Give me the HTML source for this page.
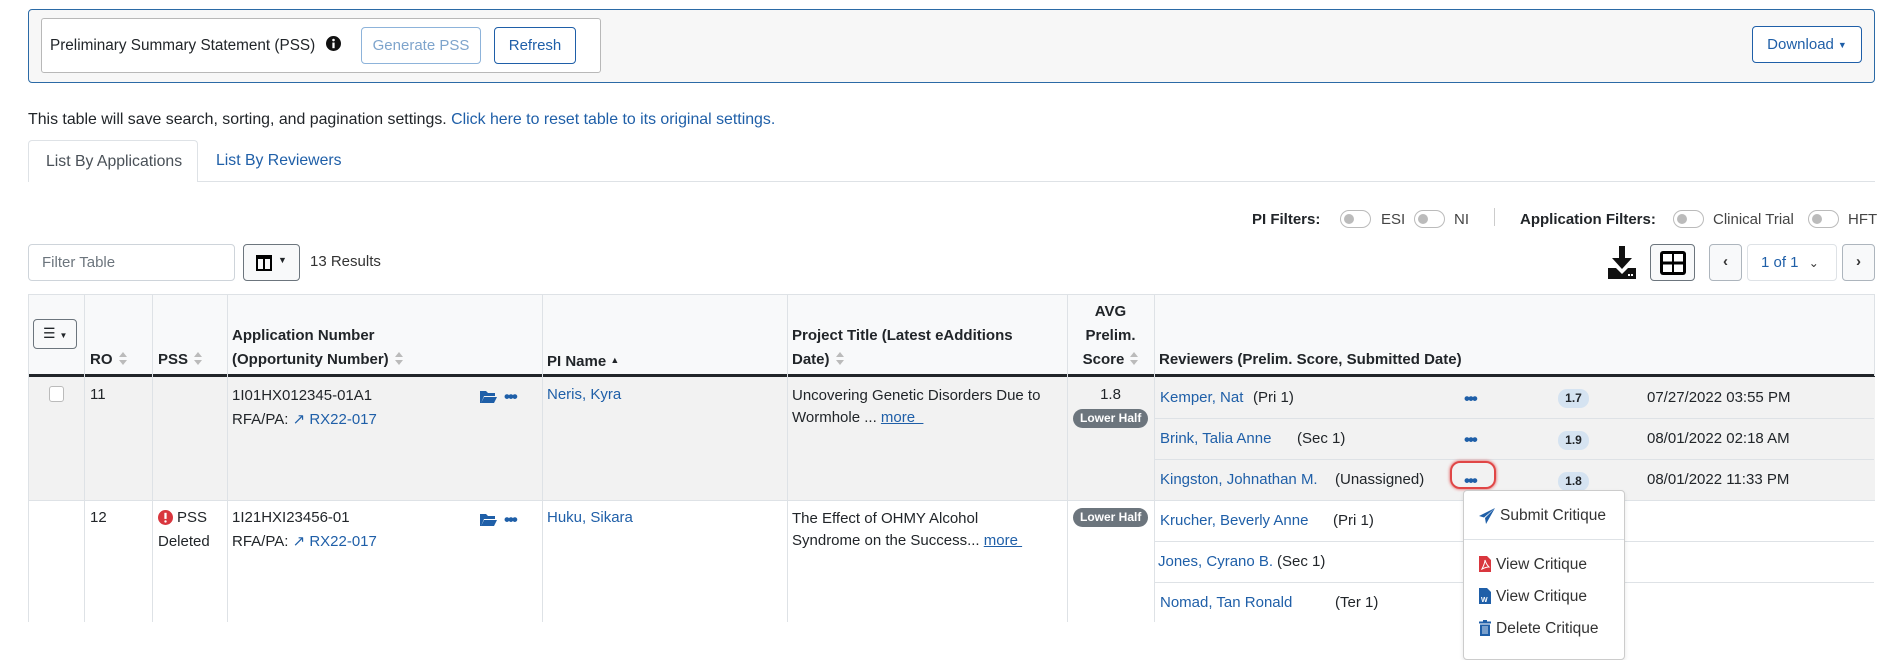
<!DOCTYPE html>
<html><head><meta charset="utf-8">
<style>
*{box-sizing:border-box;margin:0;padding:0}
body{width:1900px;height:653px;overflow:hidden;background:#fff;font-family:"Liberation Sans",sans-serif;font-size:15px;color:#212529;position:relative}
.a{position:absolute;white-space:nowrap}
.link{color:#1f5fa8}
.btn{position:absolute;border:1px solid #1f5fa8;border-radius:4px;color:#1f5fa8;background:#fff;display:flex;align-items:center;justify-content:center;font-size:15px}
.tg{position:absolute;width:31px;height:18px;border:1px solid #bbb;border-radius:9px;background:#fff}
.tg:after{content:"";position:absolute;left:3px;top:3px;width:10px;height:10px;border-radius:50%;background:#bbb}
.vl{position:absolute;width:1px;background:#dee2e6}
.hl{position:absolute;height:1px;background:#dee2e6}
.th{position:absolute;font-weight:bold;line-height:24px;font-size:15px}
.sort{display:inline-block;width:8px;height:14px;vertical-align:-2px;margin-left:6px}
.badge{position:absolute;background:#6c757d;color:#fff;font-weight:bold;font-size:12px;border-radius:10px;height:19px;line-height:19px;padding:0 7px}
.sb{position:absolute;background:#d5e3f1;color:#212529;font-weight:bold;font-size:12px;border-radius:9px;width:31px;height:19px;line-height:19px;text-align:center}
.dots{position:absolute;color:#1f5fa8;font-weight:bold;font-size:17px;letter-spacing:-2px;line-height:17px}
</style></head><body>

<div class="a" style="left:28px;top:9px;width:1847px;height:74px;background:#f7f7f7;border:1px solid #2b6aa6;border-radius:4px"></div>
<div class="a" style="left:41px;top:18px;width:560px;height:55px;background:#fff;border:1px solid #b8b8b8;border-radius:3px"></div>
<div class="a" style="left:50px;top:37px;font-size:15.3px">Preliminary Summary Statement (PSS)</div>
<svg class="a" style="left:326px;top:36px" width="15" height="15" viewBox="0 0 16 16"><circle cx="8" cy="8" r="8" fill="#111"/><rect x="6.8" y="7" width="2.4" height="6" fill="#fff"/><circle cx="8" cy="4.3" r="1.4" fill="#fff"/></svg>
<div class="btn" style="left:361px;top:27px;width:120px;height:37px;border-color:#8db3da;color:#7ea4cc">Generate PSS</div>
<div class="btn" style="left:494px;top:27px;width:82px;height:37px">Refresh</div>
<div class="btn" style="left:1752px;top:26px;width:110px;height:37px">Download<span style="font-size:9px;margin-left:4px">▼</span></div>

<div class="a" style="left:28px;top:111px;font-size:15.9px">This table will save search, sorting, and pagination settings. <span class="link">Click here to reset table to its original settings.</span></div>

<div class="hl" style="left:28px;top:181px;width:1847px"></div>
<div class="a" style="left:28px;top:140px;width:170px;height:42px;border:1px solid #dee2e6;border-bottom:none;background:#fff;border-radius:4px 4px 0 0;color:#495057;padding:12px 0 0 17px;font-size:15.8px">List By Applications</div>
<div class="a link" style="left:216px;top:152px;font-size:15.8px">List By Reviewers</div>

<div class="a" style="left:1252px;top:211px;font-weight:bold">PI Filters:</div>
<div class="tg" style="left:1340px;top:210px"></div><div class="a" style="left:1381px;top:211px;color:#444">ESI</div>
<div class="tg" style="left:1414px;top:210px"></div><div class="a" style="left:1454px;top:211px;color:#444">NI</div>
<div class="a" style="left:1494px;top:208px;width:1px;height:18px;background:#ccc"></div>
<div class="a" style="left:1520px;top:211px;font-weight:bold">Application Filters:</div>
<div class="tg" style="left:1673px;top:210px"></div><div class="a" style="left:1713px;top:211px;color:#444">Clinical Trial</div>
<div class="tg" style="left:1808px;top:210px"></div><div class="a" style="left:1848px;top:211px;color:#444">HFT</div>

<div class="a" style="left:28px;top:244px;width:207px;height:37px;border:1px solid #ced4da;border-radius:4px;color:#6c757d;padding:9px 0 0 13px">Filter Table</div>
<div class="a" style="left:243px;top:244px;width:57px;height:37px;border:1px solid #6c757d;border-radius:4px;background:#f8f9fa">
<svg style="position:absolute;left:12px;top:10px" width="16" height="16" viewBox="0 0 16 16"><rect x="1" y="1" width="14" height="14" fill="none" stroke="#000" stroke-width="2"/><rect x="1" y="1" width="14" height="3" fill="#000"/><rect x="7" y="1" width="2" height="14" fill="#000"/></svg>
<span style="position:absolute;left:34px;top:10px;font-size:9px">▼</span></div>
<div class="a" style="left:310px;top:253px;color:#333">13 Results</div>

<svg class="a" style="left:1607px;top:246px" width="30" height="33" viewBox="0 0 30 33"><rect x="12" y="0" width="6" height="14" fill="#111"/><polygon points="5,12 25,12 15,23" fill="#111"/><path d="M1 22 H9 L15 28 L21 22 H29 V33 H1 Z" fill="#111"/><rect x="21" y="28" width="2" height="2" fill="#fff"/><rect x="24" y="28" width="2" height="2" fill="#fff"/></svg>
<div class="a" style="left:1650px;top:244px;width:45px;height:37px;border:1px solid #6c757d;border-radius:4px;background:#f8f9fa">
<svg style="position:absolute;left:9px;top:6px" width="26" height="24" viewBox="0 0 26 24"><rect x="0" y="0" width="26" height="24" rx="3" fill="#000"/><rect x="3" y="3" width="9" height="7.5" fill="#fff"/><rect x="14" y="3" width="9" height="7.5" fill="#fff"/><rect x="3" y="13.5" width="9" height="7.5" fill="#fff"/><rect x="14" y="13.5" width="9" height="7.5" fill="#fff"/></svg></div>
<div class="a" style="left:1709px;top:244px;width:33px;height:37px;border:1px solid #adb5bd;border-radius:4px;background:#f8f9fa;text-align:center;line-height:34px;font-weight:bold;color:#333">‹</div>
<div class="a" style="left:1747px;top:244px;width:90px;height:37px;border:1px solid #dee2e6;border-radius:4px;padding:9px 0 0 13px;color:#1f5fa8">1 of 1 <span style="color:#333;margin-left:6px;font-size:12px">&#8964;</span></div>
<div class="a" style="left:1842px;top:244px;width:33px;height:37px;border:1px solid #adb5bd;border-radius:4px;background:#f8f9fa;text-align:center;line-height:34px;font-weight:bold;color:#333">›</div>

<div class="a" style="left:28px;top:294px;width:1847px;height:82px;background:#f8f9fa;border-top:1px solid #dee2e6"></div>
<div class="a" style="left:28px;top:376px;width:1847px;height:124px;background:#f2f2f2"></div>
<div class="a" style="left:28px;top:374px;width:1847px;height:3px;background:#212529"></div>
<div class="hl" style="left:28px;top:500px;width:1847px"></div>
<div class="vl" style="left:28px;top:294px;height:328px"></div>
<div class="vl" style="left:84px;top:294px;height:328px"></div>
<div class="vl" style="left:152px;top:294px;height:328px"></div>
<div class="vl" style="left:227px;top:294px;height:328px"></div>
<div class="vl" style="left:542px;top:294px;height:328px"></div>
<div class="vl" style="left:787px;top:294px;height:328px"></div>
<div class="vl" style="left:1067px;top:294px;height:328px"></div>
<div class="vl" style="left:1154px;top:294px;height:328px"></div>
<div class="vl" style="left:1874px;top:294px;height:82px"></div>
<div class="hl" style="left:1154px;top:418px;width:720px"></div>
<div class="hl" style="left:1154px;top:459px;width:720px"></div>
<div class="hl" style="left:1154px;top:541px;width:720px"></div>
<div class="hl" style="left:1154px;top:582px;width:720px"></div>

<div class="a" style="left:33px;top:319px;width:44px;height:30px;border:1px solid #6c757d;border-radius:4px;font-size:14px;padding:5px 0 0 9px">☰ <span style="font-size:8px">▼</span></div>
<svg width="0" height="0" style="position:absolute"><defs><g id="srt"><polygon points="4,0 8,5 0,5" fill="#bbb"/><polygon points="0,8 8,8 4,13" fill="#bbb"/></g></defs></svg>
<div class="th" style="left:90px;top:348px">RO<svg class="sort" viewBox="0 0 8 14"><use href="#srt"/></svg></div>
<div class="th" style="left:158px;top:348px">PSS<svg class="sort" viewBox="0 0 8 14"><use href="#srt"/></svg></div>
<div class="th" style="left:232px;top:324px">Application Number<br>(Opportunity Number)<svg class="sort" viewBox="0 0 8 14"><use href="#srt"/></svg></div>
<div class="th" style="left:547px;top:348px">PI Name <span style="font-size:9px;vertical-align:3px">▲</span></div>
<div class="th" style="left:792px;top:324px">Project Title (Latest eAdditions<br>Date)<svg class="sort" viewBox="0 0 8 14"><use href="#srt"/></svg></div>
<div class="th" style="left:1067px;top:300px;width:87px;text-align:center">AVG<br>Prelim.<br>Score<svg class="sort" viewBox="0 0 8 14"><use href="#srt"/></svg></div>
<div class="th" style="left:1159px;top:348px">Reviewers (Prelim. Score, Submitted Date)</div>

<div class="a" style="left:49px;top:386px;width:15px;height:16px;border:1px solid #bbb;border-radius:3px;background:#fff"></div>
<div class="a" style="left:90px;top:386px">11</div>
<div class="a" style="left:232px;top:384px;line-height:24px">1I01HX012345-01A1<br>RFA/PA: <span class="link">&#x2197;&#xFE0E; RX22-017</span></div>
<svg class="a" style="left:480px;top:390px" width="17" height="13" viewBox="0 0 17 13"><path d="M0 1h6l2 2h7v3H4L1 13H0z M4 7h13l-3 6H1z" fill="#1f5fa8"/></svg>
<div class="dots" style="left:504px;top:388px">•••</div>
<div class="a link" style="left:547px;top:386px">Neris, Kyra</div>
<div class="a" style="left:792px;top:385px;line-height:22px">Uncovering Genetic Disorders Due to<br>Wormhole ... <span class="link" style="text-decoration:underline">more&nbsp;&nbsp;</span></div>
<div class="a" style="left:1067px;top:386px;width:87px;text-align:center">1.8</div>
<div class="badge" style="left:1073px;top:409px">Lower Half</div>

<div class="a link" style="left:1160px;top:389px">Kemper, Nat</div><div class="a" style="left:1253px;top:389px">(Pri 1)</div>
<div class="dots" style="left:1464px;top:390px">•••</div><div class="sb" style="left:1558px;top:389px">1.7</div><div class="a" style="left:1647px;top:389px">07/27/2022 03:55 PM</div>
<div class="a link" style="left:1160px;top:430px">Brink, Talia Anne</div><div class="a" style="left:1297px;top:430px">(Sec 1)</div>
<div class="dots" style="left:1464px;top:431px">•••</div><div class="sb" style="left:1558px;top:431px">1.9</div><div class="a" style="left:1647px;top:430px">08/01/2022 02:18 AM</div>
<div class="a link" style="left:1160px;top:471px">Kingston, Johnathan M.</div><div class="a" style="left:1335px;top:471px">(Unassigned)</div>
<div class="a" style="left:1450px;top:461px;width:46px;height:28px;border:2px solid #e04646;border-radius:10px;box-shadow:0 0 3px #e04646"></div>
<div class="dots" style="left:1464px;top:472px">•••</div><div class="sb" style="left:1558px;top:472px">1.8</div><div class="a" style="left:1647px;top:471px">08/01/2022 11:33 PM</div>

<div class="a" style="left:90px;top:509px">12</div>
<svg class="a" style="left:158px;top:510px" width="15" height="15" viewBox="0 0 16 16"><circle cx="8" cy="8" r="8" fill="#d9363e"/><rect x="6.8" y="3" width="2.4" height="6.5" fill="#fff"/><circle cx="8" cy="12.2" r="1.3" fill="#fff"/></svg>
<div class="a" style="left:177px;top:509px">PSS</div><div class="a" style="left:158px;top:533px">Deleted</div>
<div class="a" style="left:232px;top:506px;line-height:24px">1I21HXI23456-01<br>RFA/PA: <span class="link">&#x2197;&#xFE0E; RX22-017</span></div>
<svg class="a" style="left:480px;top:513px" width="17" height="13" viewBox="0 0 17 13"><path d="M0 1h6l2 2h7v3H4L1 13H0z M4 7h13l-3 6H1z" fill="#1f5fa8"/></svg>
<div class="dots" style="left:504px;top:511px">•••</div>
<div class="a link" style="left:547px;top:509px">Huku, Sikara</div>
<div class="a" style="left:792px;top:508px;line-height:22px">The Effect of OHMY Alcohol<br>Syndrome on the Success... <span class="link" style="text-decoration:underline">more&nbsp;</span></div>
<div class="badge" style="left:1073px;top:508px">Lower Half</div>
<div class="a link" style="left:1160px;top:512px">Krucher, Beverly Anne</div><div class="a" style="left:1333px;top:512px">(Pri 1)</div>
<div class="a link" style="left:1158px;top:553px">Jones, Cyrano B.</div><div class="a" style="left:1277px;top:553px">(Sec 1)</div>
<div class="a link" style="left:1160px;top:594px">Nomad, Tan Ronald</div><div class="a" style="left:1335px;top:594px">(Ter 1)</div>

<div class="a" style="left:1463px;top:490px;width:162px;height:170px;background:#fff;border:1px solid #ccc;border-radius:4px;box-shadow:0 2px 4px rgba(0,0,0,.1)"></div>
<div class="hl" style="left:1464px;top:539px;width:160px"></div>
<svg class="a" style="left:1479px;top:508px" width="16" height="16" viewBox="0 0 16 16"><path d="M16 0 L0 8 L5 9.5 Z M16 0 L6 10 L7 16 Z" fill="#1f5fa8"/></svg>
<div class="a" style="left:1500px;top:507px;color:#333;font-size:15.5px">Submit Critique</div>
<svg class="a" style="left:1479px;top:556px" width="12" height="16" viewBox="0 0 12 16"><path d="M0 0h8l4 4v12H0z" fill="#d9363e"/><path d="M3 13 C5 9 6 6 6 4 C7 8 9 10 10 11 C7 11 5 12 3 13z" fill="none" stroke="#fff" stroke-width="1"/></svg>
<div class="a" style="left:1496px;top:556px;color:#333;font-size:15.5px">View Critique</div>
<svg class="a" style="left:1479px;top:588px" width="12" height="16" viewBox="0 0 12 16"><path d="M0 0h8l4 4v12H0z" fill="#1f5fa8"/><text x="2" y="14" font-size="7" fill="#fff" font-family="Liberation Sans" font-weight="bold">W</text></svg>
<div class="a" style="left:1496px;top:588px;color:#333;font-size:15.5px">View Critique</div>
<svg class="a" style="left:1479px;top:620px" width="12" height="16" viewBox="0 0 12 16"><rect x="0" y="1.5" width="12" height="2" fill="#1f5fa8"/><rect x="4" y="0" width="4" height="2" fill="#1f5fa8"/><path d="M1 4.5h10v11.5H1z" fill="#1f5fa8"/><path d="M4 6v8M6 6v8M8 6v8" stroke="#fff" stroke-width="0.8"/></svg>
<div class="a" style="left:1496px;top:620px;color:#333;font-size:15.5px">Delete Critique</div>
</body></html>
